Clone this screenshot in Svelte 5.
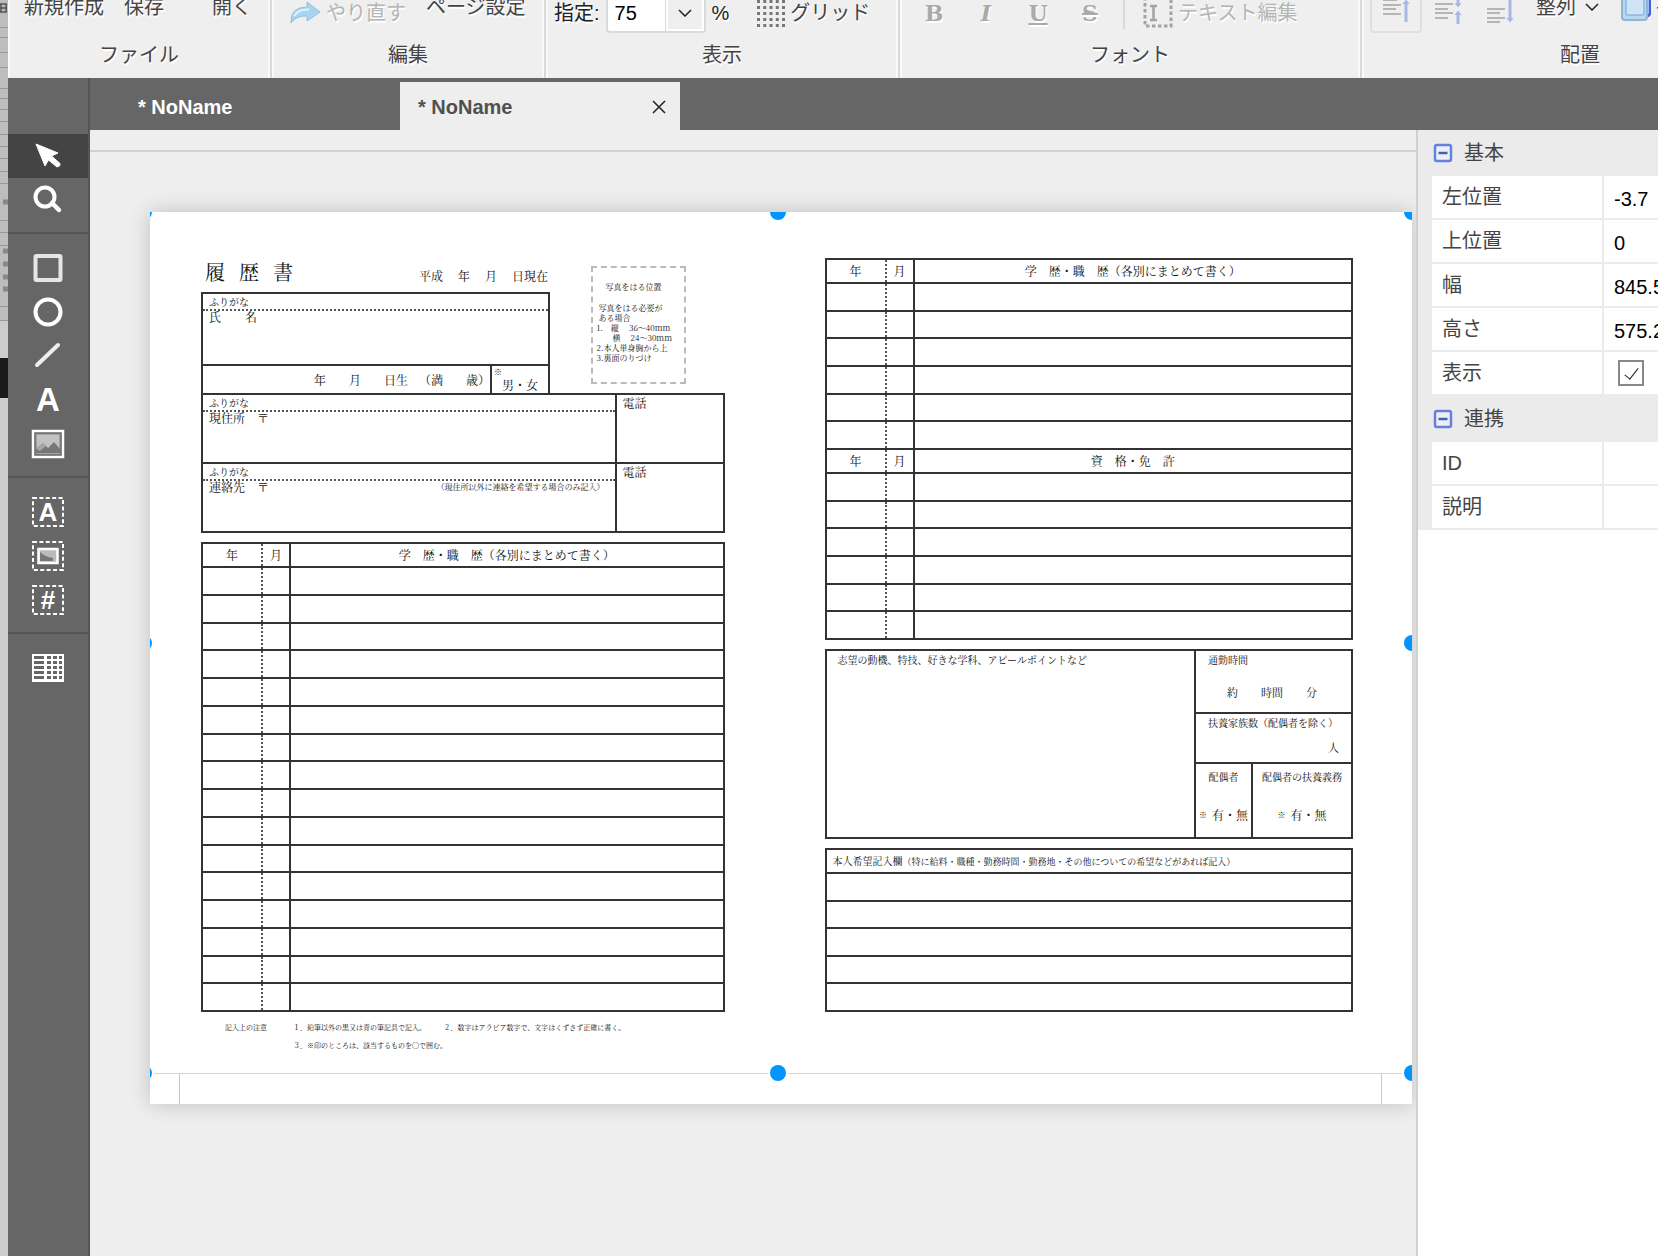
<script>
    let zoom = $state(75)
    let tool = $state('select')
    let tab = $state(1)
    let shown = $state(true)
    let open = $state({ basic: true, link: true })

    let basic = $state([
        { id: 'left', label: '左位置', value: '-3.7' },
        { id: 'top', label: '上位置', value: '0' },
        { id: 'width', label: '幅', value: '845.5' },
        { id: 'height', label: '高さ', value: '575.2' }
    ])

    let link = $state([
        { id: 'obj-id', label: 'ID', value: '' },
        { id: 'desc', label: '説明', value: '' }
    ])

    const toolGroups = [
        ['select', 'zoom'],
        ['rect', 'ellipse', 'line', 'text', 'image'],
        ['text-field', 'image-field', 'number-field'],
        ['table']
    ]

    const handles = [
        [0, 0], [50, 0], [100, 0],
        [0, 50], [100, 50],
        [0, 100], [50, 100], [100, 100]
    ]

    // sheet lines of the window that lies behind this one
    const behind = [27, 37, 52, 67, 88, 98, 109, 121, 134, 146, 158, 171, 183, 220, 232, 245, 306, 320]
</script>

{#snippet icon(name)}
    <svg width="34" height="32" viewBox="0 0 34 32" fill="none" stroke="#fff">
        {#if name == 'select'}
            <path d="M5 4L27 13L20.500 16L29 23.500Q30 26 26 27L17.500 20L14 26Z" fill="#fff" stroke="#fff" stroke-linejoin="round" />
        {:else if name == 'zoom'}
            <circle cx="14" cy="13" r="9.500" stroke-width="4" />
            <path d="M21 19L28 26" stroke-width="4.500" stroke-linecap="round" />
        {:else if name == 'rect'}
            <rect x="4.500" y="4" width="25" height="24" rx="1" stroke="#e6e6e6" stroke-width="4" />
        {:else if name == 'ellipse'}
            <circle cx="17" cy="16" r="12.500" stroke-width="4" />
        {:else if name == 'line'}
            <path d="M6 25L27 5" stroke="#eee" stroke-width="4" stroke-linecap="round" />
        {:else if name == 'text'}
            <text x="17" y="27" class="glyph" font-size="33">A</text>
        {:else if name == 'image'}
            <rect x="2" y="3" width="30" height="26" stroke-width="2.500" />
            <rect x="5" y="6" width="24" height="20" fill="#c2c2c2" stroke="#888" stroke-width="1" />
            <path d="M5 25V21L12 15L17 20L23 14L29 21V25Z" fill="#777" stroke="none" />
            <path d="M5 21L12 15L15 18L9 23" fill="#a5a5a5" stroke="none" />
        {:else if name == 'table'}
            <rect x="1" y="2" width="32" height="28" fill="#fff" stroke="none" />
            {#each [4, 9, 14, 19, 24] as y}
                <path d="M3 {y + 1.500}H13M16 {y + 1.500}H20M22 {y + 1.500}H26M28 {y + 1.500}H31" stroke="#666" stroke-width="3" />
            {/each}
        {:else}
            <rect x="2" y="2" width="30" height="28" stroke-width="2" stroke-dasharray="4 2.400" />
            {#if name == 'text-field'}
                <text x="17" y="25" class="glyph" font-size="26">A</text>
            {:else if name == 'image-field'}
                <rect x="7.500" y="9" width="19" height="14" fill="#bbb" stroke-width="2.500" />
                <path d="M9 21V12Q14 17 22 18V21Z" fill="#777" stroke="none" />
            {:else}
                <text x="17" y="25" class="glyph" font-size="26">#</text>
            {/if}
        {/if}
    </svg>
{/snippet}

{#snippet history(title, rows)}
    <thead>
        <tr>
            <th class="year">年</th>
            <th class="month">月</th>
            <th>{title}</th>
        </tr>
    </thead>
    <tbody>
        {#each Array(rows) as _}
            <tr><td class="year"></td><td class="month"></td><td></td></tr>
        {/each}
    </tbody>
{/snippet}

{#snippet section(key, title)}
    <button class="section" onclick={() => open[key] = !open[key]}>
        <svg width="20" height="20" viewBox="0 0 20 20">
            <rect x="2" y="2" width="16" height="16" rx="2" fill="#eceef8" stroke="#6681dd" stroke-width="2.500" />
            <path d="M5.500 10H14.500" stroke="#4560b0" stroke-width="2.500" />
        </svg>
        {title}
    </button>
{/snippet}

<div class="screen">
    <svg class="behind" width="8" height="400">
        <rect width="8" height="320" fill="#bdbdbd" />
        {#each behind as y}
            <path d="M0 {y}.500H8" stroke="#999" />
        {/each}
        <path d="M0 4H7M0 8H7M0 12H7M1 4V12M6 4V12" stroke="#555" stroke-width="1.500" />
        <path d="M3 202H8M3 251H8M3 264H8M3 277H8M3 289H8" stroke="#888" stroke-width="5" />
        <rect y="358" width="8" height="40" fill="#1a1a1a" />
    </svg>

    <div class="window">
        <header class="ribbon">
            <section class="group">
                <div class="tools file">
                    <button class="big">新規作成</button>
                    <button class="big">保存</button>
                    <button class="big last">開く</button>
                </div>
                <h2>ファイル</h2>
            </section>

            <section class="group">
                <div class="tools edit">
                    <button class="small" disabled>
                        <svg width="32" height="24" viewBox="0 0 32 24">
                            <path d="M2 22Q1 6 18 6V1L31 11L18 20V15Q8 14 2 22Z" fill="#a5d5f3" stroke="#96bfdd" />
                            <path d="M5 15Q9 8 20 8.500" fill="none" stroke="#dff2fd" stroke-width="2" />
                        </svg>
                        やり直す
                    </button>
                    <button class="big">ページ設定</button>
                </div>
                <h2>編集</h2>
            </section>

            <section class="group">
                <div class="tools view">
                    <label for="zoom">指定:</label>
                    <div class="combo">
                        <input id="zoom" type="text" bind:value={zoom}>
                        <button aria-label="倍率">
                            <svg width="14" height="8" viewBox="0 0 14 8"><path d="M1 1L7 7L13 1" fill="none" stroke="#222" stroke-width="1.500" /></svg>
                        </button>
                    </div>
                    <span>%</span>
                    <button class="small">
                        <svg width="28" height="32" viewBox="0 0 28 32">
                            {#each [4, 10, 16, 22, 28] as y}
                                <path d="M0 {y}.500H28" stroke="#777" stroke-width="3" stroke-dasharray="3 3.250" />
                            {/each}
                        </svg>
                        グリッド
                    </button>
                </div>
                <h2>表示</h2>
            </section>

            <section class="group">
                <div class="tools font">
                    <button class="style" disabled><b>B</b></button>
                    <button class="style" disabled><i>I</i></button>
                    <button class="style" disabled><u>U</u></button>
                    <button class="style" disabled><s>S</s></button>
                    <span class="rule"></span>
                    <button class="small" disabled>
                        <svg width="30" height="32" viewBox="0 0 30 32" fill="none" stroke="#a3a3a3">
                            <path d="M2 0V29H28V0" stroke-width="3" stroke-dasharray="3.500 2.500" />
                            <path d="M7 9H14M7 23H14M10.500 9V23" stroke-width="2.500" />
                        </svg>
                        テキスト編集
                    </button>
                </div>
                <h2>フォント</h2>
            </section>

            <section class="group">
                <div class="tools align">
                    <button class="boxed" disabled aria-label="上揃え">
                        <svg width="28" height="32" viewBox="0 0 28 32" fill="none">
                            <path d="M1 5H15M1 10H19M1 14H14M1 19H19" stroke="#b5b5b5" stroke-width="2" />
                            <path d="M24 27V8" stroke="#a9b6e8" stroke-width="3" />
                            <path d="M20.500 9L24 4.500L27.500 9Z" fill="#a9b6e8" />
                        </svg>
                    </button>
                    <button class="boxed plain" disabled aria-label="中央揃え">
                        <svg width="28" height="32" viewBox="0 0 28 32" fill="none">
                            <path d="M1 9H19M1 14H14M1 18H19M1 23H14" stroke="#b5b5b5" stroke-width="2" />
                            <path d="M24 2V9M24 20V29" stroke="#a9b6e8" stroke-width="3" />
                            <path d="M20.500 8L24 12.500L27.500 8ZM20.500 20L24 15.500L27.500 20Z" fill="#a9b6e8" />
                        </svg>
                    </button>
                    <button class="boxed plain" disabled aria-label="下揃え">
                        <svg width="28" height="32" viewBox="0 0 28 32" fill="none">
                            <path d="M1 14H19M1 18H14M1 23H19M1 27H14" stroke="#b5b5b5" stroke-width="2" />
                            <path d="M24 3V24" stroke="#a9b6e8" stroke-width="3" />
                            <path d="M20.500 23L24 27.500L27.500 23Z" fill="#a9b6e8" />
                        </svg>
                    </button>
                    <button class="big menu">
                        整列
                        <svg width="14" height="8" viewBox="0 0 14 8"><path d="M1 1L7 7L13 1" fill="none" stroke="#222" stroke-width="1.500" /></svg>
                    </button>
                    <button class="big order">
                        <svg width="30" height="32" viewBox="0 0 30 32">
                            <rect x="4" y="0" width="25" height="25" rx="3" fill="#c3dcf2" stroke="#3f62d6" stroke-width="2.500" />
                            <rect x="1" y="3" width="25" height="26" rx="3" fill="#b9d8ee" stroke="#8fb4d6" stroke-width="2" />
                            <rect x="5" y="4" width="18" height="20" rx="1" fill="#cfe5f5" stroke="#6fa0e0" />
                        </svg>
                        手前
                    </button>
                </div>
                <h2>配置</h2>
            </section>
        </header>

        <div class="body">
            <nav class="toolbox">
                {#each toolGroups as group}
                    <div class="toolgroup">
                        {#each group as name}
                            <button class:active={tool == name} aria-label={name} onclick={() => tool = name}>
                                {@render icon(name)}
                            </button>
                        {/each}
                    </div>
                {/each}
            </nav>

            <div class="work">
                <div class="tabs">
                    <div class="tab first" class:current={tab == 0}>
                        <button onclick={() => tab = 0}>* NoName</button>
                    </div>
                    <div class="tab" class:current={tab == 1}>
                        <button onclick={() => tab = 1}>* NoName</button>
                        <button class="close" aria-label="閉じる">
                            <svg width="14" height="14" viewBox="0 0 14 14"><path d="M1 1L13 13M13 1L1 13" stroke="#222" stroke-width="1.500" /></svg>
                        </button>
                    </div>
                </div>

                <div class="editor">
                    <main class="canvas">
                        <div class="ruler"></div>
                        <div class="page">
                            <div class="form">
                                <div class="sheet">
                                    <div class="person">
                                        <div class="who">
                                            <div class="title">
                                                <h1><span>履</span><span>歴</span><span>書</span></h1>
                                                <p class="date"><span>平成</span><span>年</span><span>月</span><span>日現在</span></p>
                                            </div>
                                            <div class="name">
                                                <p class="kana">ふりがな</p>
                                                <p class="value">氏　　名</p>
                                            </div>
                                            <div class="birth">
                                                <p class="born"><span>年</span><span>月</span><span>日生</span><span>（満</span><span>歳）</span></p>
                                                <p class="sex"><small>※</small>男・女</p>
                                            </div>
                                        </div>
                                        <div class="photo">
                                            <p class="head">写真をはる位置</p>
                                            <p class="need">写真をはる必要が<br>ある場合</p>
                                            <p>1.　縦　 36～40mm<br>　　横　 24～30mm<br>2.本人単身胸から上<br>3.裏面のりづけ</p>
                                        </div>
                                    </div>

                                    <div class="address">
                                        <div class="place">
                                            <p class="kana">ふりがな</p>
                                            <p class="value">現住所　〒</p>
                                        </div>
                                        <p class="tel">電話</p>
                                        <div class="place">
                                            <p class="kana">ふりがな</p>
                                            <p class="value">連絡先　〒 <small>（現住所以外に連絡を希望する場合のみ記入）</small></p>
                                        </div>
                                        <p class="tel">電話</p>
                                    </div>

                                    <table class="career">
                                        {@render history('学　歴・職　歴（各別にまとめて書く）', 16)}
                                    </table>

                                    <div class="notes">
                                        <span>記入上の注意</span>
                                        <p>１．鉛筆以外の黒又は青の筆記具で記入。　　　２．数字はアラビア数字で、文字はくずさず正確に書く。<br>３．※印のところは、該当するものを〇で囲む。</p>
                                    </div>
                                </div>

                                <div class="sheet">
                                    <table class="half first">
                                        {@render history('学　歴・職　歴（各別にまとめて書く）', 6)}
                                    </table>
                                    <table class="half">
                                        {@render history('資　格・免　許', 6)}
                                    </table>

                                    <div class="appeal">
                                        <p class="motive">志望の動機、特技、好きな学科、アピールポイントなど</p>
                                        <div class="facts">
                                            <div class="commute">
                                                <p>通勤時間</p>
                                                <p class="blank"><span>約</span><span>時間</span><span>分</span></p>
                                            </div>
                                            <div class="family">
                                                <p>扶養家族数（配偶者を除く）</p>
                                                <p class="count">人</p>
                                            </div>
                                            <div class="spouse">
                                                <div>
                                                    <p>配偶者</p>
                                                    <p class="choice"><small>※</small>有・無</p>
                                                </div>
                                                <div>
                                                    <p>配偶者の扶養義務</p>
                                                    <p class="choice"><small>※</small>有・無</p>
                                                </div>
                                            </div>
                                        </div>
                                    </div>

                                    <table class="wishes">
                                        <thead>
                                            <tr><th>本人希望記入欄<small>（特に給料・職種・勤務時間・勤務地・その他についての希望などがあれば記入）</small></th></tr>
                                        </thead>
                                        <tbody>
                                            {#each Array(5) as _}
                                                <tr><td></td></tr>
                                            {/each}
                                        </tbody>
                                    </table>
                                </div>

                                <div class="selection">
                                    {#each handles as [x, y]}
                                        <span class="handle" style="left: {x}%; top: {y}%"></span>
                                    {/each}
                                </div>
                            </div>
                            <div class="margin"></div>
                        </div>
                    </main>

                    <aside class="props">
                        <div class="fields">
                            {@render section('basic', '基本')}
                            {#if open.basic}
                                {#each basic as field}
                                    <div class="field">
                                        <label for={field.id}>{field.label}</label>
                                        <input type="text" id={field.id} bind:value={field.value}>
                                    </div>
                                {/each}
                                <div class="field">
                                    <label for="shown">表示</label>
                                    <div class="check"><input type="checkbox" id="shown" bind:checked={shown}></div>
                                </div>
                            {/if}
                            {@render section('link', '連携')}
                            {#if open.link}
                                {#each link as field}
                                    <div class="field">
                                        <label for={field.id}>{field.label}</label>
                                        <input type="text" id={field.id} bind:value={field.value}>
                                    </div>
                                {/each}
                            {/if}
                        </div>
                    </aside>
                </div>
            </div>
        </div>
    </div>
</div>

<style>
    :global(body) {
        margin: 0;
        background: #ccc;
    }

    .screen, .screen * {
        box-sizing: border-box;
    }

    .screen {
        display: flex;
        min-height: 100vh;
        overflow: hidden;
        font: 20px/24px "Liberation Sans", "Noto Sans CJK JP", sans-serif;
        color: #444;
    }

    .behind {
        flex: none;
    }

    h1, h2, p {
        margin: 0;
        font-weight: normal;
    }

    button, input {
        margin: 0;
        padding: 0;
        border: 0;
        border-radius: 0;
        background: none;
        font: inherit;
        color: inherit;
        text-shadow: inherit;
    }

    svg {
        display: block;
    }

    .window {
        flex: 1;
        min-width: 0;
        display: flex;
        flex-direction: column;
    }

    /* ribbon */
    .ribbon {
        display: grid;
        grid-template-columns: 264px 274px 354px 462px 438px;
        height: 78px;
        overflow: hidden;
        background: #efefef;
        text-shadow: 1px 2px 0 #fff;
    }

    .group {
        display: flex;
        flex-direction: column;
        justify-content: flex-end;
        height: 78px;
        padding-bottom: 11px;
        border-right: 2px solid #d9d9d9;
        box-shadow: inset 2px 0 #f9f9f9, inset -2px 0 #f9f9f9;
    }

    .group h2 {
        font-size: 20px;
        text-align: center;
    }

    .tools {
        display: flex;
        align-items: flex-end;
        height: 62px;
        flex: none;
        padding-bottom: 10px;
        white-space: nowrap;
    }

    .big {
        margin-bottom: 14px;
    }

    .small {
        display: flex;
        align-items: center;
        gap: 5px;
        height: 40px;
    }

    .small:disabled {
        color: #b5b5b5;
    }

    .file {
        gap: 20px;
        padding-left: 16px;
    }

    .file .last {
        margin-left: 28px;
    }

    .edit {
        gap: 20px;
        padding-left: 17px;
    }

    .view {
        padding-left: 8px;
    }

    .view label, .view > span {
        line-height: 40px;
        color: #222;
    }

    .view > span {
        margin: 0 28px 0 6px;
    }

    .combo {
        display: flex;
        height: 40px;
        margin-left: 6px;
        border: 2px solid #dadada;
        border-radius: 4px;
        background: #fff;
    }

    .combo input {
        width: 58px;
        padding-left: 7px;
        color: #000;
    }

    .combo button {
        display: flex;
        align-items: center;
        justify-content: center;
        width: 38px;
        background: #efefef;
        border: 2px solid #fff;
        outline: 1px solid #dadada;
    }

    .font {
        padding-left: 8px;
    }

    .style {
        width: 52px;
        height: 40px;
        font: bold 22px/40px "DejaVu Serif", "Liberation Serif", serif;
        color: #aaa;
    }

    .rule {
        width: 2px;
        height: 40px;
        margin: 0 18px 4px 7px;
        background: #d9d9d9;
    }

    .align {
        padding-left: 8px;
    }

    .boxed {
        display: flex;
        justify-content: center;
        align-items: center;
        width: 52px;
        height: 44px;
        border: 2px solid #dfdfdf;
        border-radius: 4px;
    }

    .boxed.plain {
        border-color: transparent;
    }

    .menu, .order {
        display: flex;
        align-items: center;
    }

    .menu {
        gap: 9px;
        margin-left: 10px;
    }

    .order {
        gap: 5px;
        height: 24px;
        margin-left: 22px;
    }

    /* toolbox */
    .body {
        flex: 1;
        display: flex;
    }

    .toolbox {
        flex: none;
        width: 82px;
        padding-top: 56px;
        background: #666;
        border-right: 2px solid #555;
    }

    .toolgroup {
        padding-bottom: 10px;
        border-bottom: 2px solid #555;
    }

    .toolgroup + .toolgroup {
        padding-top: 12px;
    }

    .toolgroup:last-child {
        border: 0;
    }

    .toolgroup button {
        display: flex;
        align-items: center;
        justify-content: center;
        width: 80px;
        height: 44px;
    }

    .toolgroup .active {
        background: #444;
    }

    .glyph {
        font-family: "Liberation Sans", sans-serif;
        font-weight: bold;
        text-anchor: middle;
        fill: #fff;
        stroke: none;
    }

    /* tabs */
    .work {
        flex: 1;
        min-width: 0;
        display: flex;
        flex-direction: column;
    }

    .tabs {
        display: flex;
        padding-top: 4px;
        background: #666;
    }

    .tab {
        display: flex;
        align-items: center;
        justify-content: space-between;
        width: 280px;
        height: 48px;
        padding: 2px 14px 0 18px;
        font-weight: bold;
        color: #fff;
    }

    .tab.first {
        width: 310px;
        padding-left: 48px;
    }

    .tab.current {
        background: #eee;
        color: #505050;
    }

    .editor {
        flex: 1;
        display: flex;
    }

    .canvas {
        flex: 1;
        min-width: 0;
        background: #eee;
        overflow: hidden;
    }

    .ruler {
        height: 22px;
        border-bottom: 2px solid #d2d2d2;
    }

    .page {
        position: relative;
        margin: 60px 4px 60px 60px;
        overflow: hidden;
        background: #fff;
        box-shadow: 0 0 20px rgba(0, 0, 0, 0.2);
    }

    .form {
        position: relative;
        display: grid;
        grid-template-columns: 524fr 529fr;
        gap: 100px;
        padding: 0 59px 0 51px;
        border-bottom: 1px solid #d4d4d4;
        font: 12px/14px "Noto Serif CJK JP", "Noto Sans CJK JP", serif;
        color: #111;
        white-space: nowrap;
    }

    .selection {
        position: absolute;
        inset: 0 0 0 -6px;
    }

    .handle {
        position: absolute;
        width: 16px;
        height: 16px;
        border-radius: 50%;
        background: #0095ff;
        box-shadow: 0 0 0 2px #fff;
        transform: translate(-50%, -50%);
    }

    .margin {
        height: 30px;
        margin: 0 30px 0 29px;
        border: solid #c8c8c8;
        border-width: 0 1px;
    }

    /* left sheet */
    .person {
        display: flex;
        justify-content: space-between;
        align-items: flex-start;
    }

    .who {
        width: 349px;
    }

    .title {
        display: flex;
        justify-content: space-between;
        align-items: flex-end;
        height: 80px;
        padding: 0 2px 8px 4px;
    }

    .title h1 {
        display: flex;
        gap: 14px;
        font-size: 20px;
        line-height: 24px;
    }

    .date {
        display: flex;
        gap: 15px;
        line-height: 16px;
    }

    .name {
        height: 74px;
        border: 2px solid #333;
    }

    .kana {
        height: 17px;
        padding-left: 6px;
        border-bottom: 2px dotted #555;
        font-size: 10px;
        line-height: 16px;
    }

    .value {
        padding-left: 6px;
        line-height: 12px;
    }

    small {
        font-size: 8px;
    }

    .birth {
        display: flex;
        height: 27px;
        border: solid #333;
        border-width: 0 2px;
    }

    .born {
        flex: 1;
        display: flex;
        justify-content: flex-end;
        gap: 23px;
        line-height: 28px;
    }

    .born span:nth-child(4) {
        margin-left: -12px;
    }

    .sex {
        display: flex;
        width: 58px;
        padding-left: 2px;
        border-left: 2px solid #333;
        line-height: 38px;
    }

    .sex small {
        line-height: 12px;
    }

    .photo {
        width: 95px;
        height: 118px;
        margin: 54px 39px 0 0;
        padding: 14px 0 0 4px;
        border: 2px dashed #bbb;
        font-size: 8px;
        line-height: 10px;
    }

    .photo .head {
        padding: 0 0 11px 9px;
    }

    .photo .need {
        padding-left: 2px;
    }

    .address {
        display: grid;
        grid-template-columns: 1fr 108px;
        grid-auto-rows: 69px;
        border: solid #333;
        border-width: 2px 2px 0;
    }

    .place {
        border-bottom: 2px solid #333;
    }

    .place .value {
        display: flex;
        justify-content: space-between;
        padding-right: 10px;
    }

    .tel {
        padding: 1px 6px;
        border: solid #333;
        border-width: 0 0 2px 2px;
    }

    table {
        width: 100%;
        table-layout: fixed;
        border-collapse: collapse;
    }

    th, td {
        padding: 0;
        border: 2px solid #333;
        font-weight: normal;
    }

    thead tr {
        height: 24px;
    }

    .year {
        width: 60px;
        border-right: 2px dotted #555;
    }

    .month {
        width: 28px;
        border-left: 2px dotted #555;
    }

    .career {
        height: 470px;
        margin-top: 9px;
    }

    .notes {
        display: flex;
        gap: 26px;
        height: 61px;
        padding: 6px 0 0 24px;
        font-size: 7px;
        line-height: 18px;
    }

    /* right sheet */
    .half {
        height: 192px;
        margin-top: -2px;
    }

    .half.first {
        margin-top: 46px;
    }

    .appeal {
        display: grid;
        grid-template-columns: 1fr 157px;
        height: 190px;
        margin-top: 9px;
        border: 2px solid #333;
        font-size: 10px;
    }

    .motive {
        padding: 2px 11px;
    }

    .facts {
        display: grid;
        grid-template-rows: 63px 50px 1fr;
        border-left: 2px solid #333;
    }

    .commute, .family {
        padding: 2px 12px;
        border-bottom: 2px solid #333;
    }

    .blank {
        display: flex;
        gap: 23px;
        padding: 18px 0 0 19px;
        font-size: 11px;
    }

    .count {
        padding-top: 10px;
        font-size: 11px;
        text-align: right;
    }

    .spouse {
        display: grid;
        grid-template-columns: 57px 1fr;
        text-align: center;
    }

    .spouse > div {
        padding-top: 6px;
    }

    .spouse > div:first-child {
        border-right: 2px solid #333;
    }

    .choice {
        display: flex;
        justify-content: center;
        gap: 5px;
        padding-top: 24px;
        font-size: 12px;
    }

    .wishes {
        height: 164px;
        margin-top: 9px;
    }

    .wishes th {
        padding-left: 6px;
        font-size: 10px;
        text-align: left;
    }

    .wishes small {
        font-size: 9px;
    }

    /* properties */
    .props {
        flex: none;
        width: 242px;
        overflow: hidden;
        border-left: 2px solid #d0d0d0;
        background: #fff;
    }

    .fields {
        padding-left: 14px;
        background: #ebebeb;
    }

    .section {
        display: flex;
        align-items: center;
        gap: 11px;
        width: 100%;
        height: 46px;
        padding-left: 1px;
    }

    .field {
        display: grid;
        grid-template-columns: 170px 1fr;
        gap: 2px;
        height: 44px;
        padding-bottom: 2px;
    }

    .field label {
        padding-left: 10px;
        background: #fff;
        line-height: 42px;
    }

    .field input[type="text"] {
        min-width: 0;
        padding: 4px 0 0 10px;
        background: #fff;
        color: #000;
    }

    .check {
        display: flex;
        align-items: center;
        padding-left: 14px;
        background: #fff;
    }

    .check input {
        appearance: none;
        width: 26px;
        height: 26px;
        border: 2px solid #888;
    }

    .check input:checked::before {
        content: "";
        display: block;
        width: 6px;
        height: 13px;
        margin: 3px auto;
        border: solid #222;
        border-width: 0 1px 1px 0;
        transform: rotate(38deg);
    }
</style>
